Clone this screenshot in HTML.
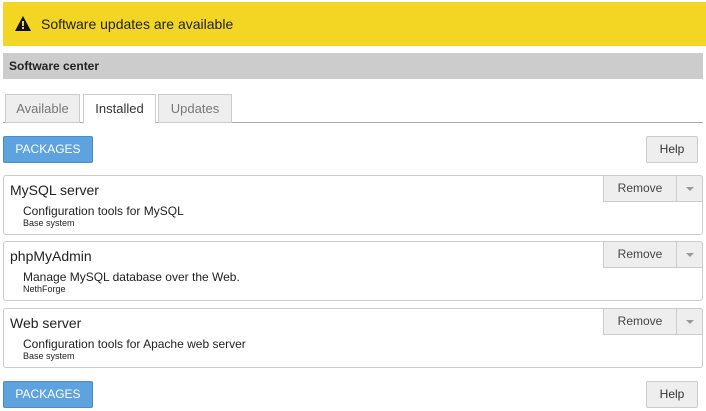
<!DOCTYPE html><html><head><style>
body{margin:0;width:706px;height:411px;background:#fff;font-family:"Liberation Sans",sans-serif;position:relative;overflow:hidden;color:#222}
div{position:absolute;box-sizing:border-box}
.banner{left:3px;top:2px;width:703px;height:44px;background:#f3d523;font-size:14px;line-height:44px;padding-left:38px}
.hdr{left:3px;top:53px;width:700px;height:26px;background:#cccccc;font-weight:bold;font-size:12px;line-height:26px;padding-left:6px;color:#222}
.tab{top:94px;height:29px;border:1px solid #ccc;background:#eee;color:#777;font-size:13px;line-height:27px;text-align:center}
.line{left:3px;top:122px;width:700px;height:1px;background:#aaa}
.btn{background:#5ea2e0;border:1px solid #4a8bc8;border-radius:2px;color:#fff;font-size:12px;text-align:center;line-height:24px;left:3px;width:90px;height:27px}
.help{left:646px;width:52px;height:27px;background:#eee;border:1px solid #ccc;border-radius:2px;font-size:12px;line-height:25px;text-align:center;color:#333}
.card{left:3px;width:700px;height:60px;border:1px solid #ccc;border-radius:3px}
.t{left:6px;top:6px;font-size:14px;color:#222}
.d{left:19px;top:28px;font-size:12px;color:#222}
.s{left:19px;top:42px;font-size:9px;color:#222}
.rm{right:25px;top:-1px;width:74px;height:27px;background:#eee;border:1px solid #ccc;font-size:12px;line-height:25px;text-align:center;color:#444}
.cr{right:-1px;top:-1px;width:27px;height:27px;background:#eee;border:1px solid #ccc;border-radius:0 3px 0 0}
.cr:after{content:"";position:absolute;left:9px;top:11px;border:4px solid transparent;border-top:4px solid #999}
</style></head><body>
<div class="banner"><svg style="position:absolute;left:12px;top:14px" width="16" height="15" viewBox="0 0 16 15"><path d="M8 0L16 15H0Z" fill="#111"/><rect x="7" y="5" width="2" height="5" fill="#f3d523"/><rect x="7" y="11" width="2" height="2" fill="#f3d523"/></svg>Software updates are available</div>
<div class="hdr">Software center</div>
<div class="line"></div>
<div class="tab" style="left:5px;width:75px">Available</div>
<div class="tab" style="left:83px;width:73px;background:#fff;color:#333;border-bottom-color:#fff;height:30px">Installed</div>
<div class="tab" style="left:158px;width:74px">Updates</div>
<div class="btn" style="top:136px">PACKAGES</div>
<div class="help" style="top:136px">Help</div>
<div class="card" style="top:175px"><div class="t">MySQL server</div><div class="d">Configuration tools for MySQL</div><div class="s">Base system</div><div class="rm">Remove</div><div class="cr"></div></div>
<div class="card" style="top:241px"><div class="t">phpMyAdmin</div><div class="d">Manage MySQL database over the Web.</div><div class="s">NethForge</div><div class="rm">Remove</div><div class="cr"></div></div>
<div class="card" style="top:308px"><div class="t">Web server</div><div class="d">Configuration tools for Apache web server</div><div class="s">Base system</div><div class="rm">Remove</div><div class="cr"></div></div>
<div class="btn" style="top:381px">PACKAGES</div>
<div class="help" style="top:381px">Help</div>
</body></html>
